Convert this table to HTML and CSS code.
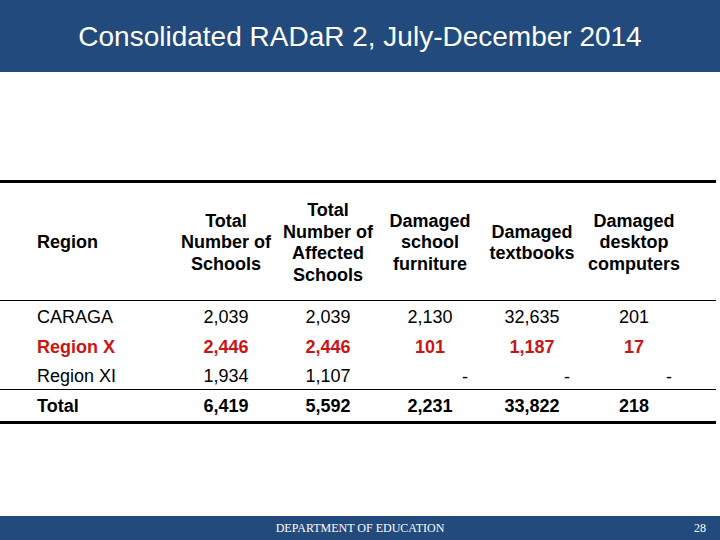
FILE: index.html
```html
<!DOCTYPE html>
<html>
<head>
<meta charset="utf-8">
<link rel="stylesheet" href="styles.css">
</head>
<body>
<div class="slide">
  <header class="title-bar">
    <h1 class="title">Consolidated RADaR 2, July-December 2014</h1>
  </header>
  <main class="content">
    <table class="data">
      <colgroup>
        <col class="c-region">
        <col class="c-num"><col class="c-num"><col class="c-num"><col class="c-num"><col class="c-num">
        <col class="c-pad">
      </colgroup>
      <thead>
        <tr class="head-row">
          <th class="region">Region</th>
          <th>Total<br>Number of<br>Schools</th>
          <th>Total<br>Number of<br>Affected<br>Schools</th>
          <th>Damaged<br>school<br>furniture</th>
          <th>Damaged<br>textbooks</th>
          <th>Damaged<br>desktop<br>computers</th>
          <th></th>
        </tr>
      </thead>
      <tbody>
        <tr class="row r1">
          <td class="region">CARAGA</td>
          <td>2,039</td><td>2,039</td><td>2,130</td><td>32,635</td><td>201</td><td></td>
        </tr>
        <tr class="row r2 highlight">
          <td class="region">Region X</td>
          <td>2,446</td><td>2,446</td><td>101</td><td>1,187</td><td>17</td><td></td>
        </tr>
        <tr class="row r3 last">
          <td class="region">Region XI</td>
          <td>1,934</td><td>1,107</td><td class="dash">-</td><td class="dash">-</td><td class="dash">-</td><td></td>
        </tr>
        <tr class="row total">
          <td class="region">Total</td>
          <td>6,419</td><td>5,592</td><td>2,231</td><td>33,822</td><td>218</td><td></td>
        </tr>
      </tbody>
    </table>
  </main>
  <footer class="foot-bar">
    <span class="dept">DEPARTMENT OF EDUCATION</span>
    <span class="page">28</span>
  </footer>
</div>
</body>
</html>
```

FILE: styles.css
```css
html, body {
  margin: 0;
  padding: 0;
  background: #ffffff;
}

.slide {
  width: 720px;
  height: 540px;
  display: flex;
  flex-direction: column;
  font-family: "Liberation Sans", Arial, sans-serif;
  overflow: hidden;
}

.title-bar {
  height: 72px;
  background: #224a7c;
  display: flex;
  align-items: center;
  justify-content: center;
}

.title {
  margin: 0;
  font-weight: normal;
  font-size: 28px;
  color: #ffffff;
  line-height: 1;
  padding-top: 2px;
}

.content {
  flex: 1;
  padding-top: 108px;
}

.data {
  width: 716px;
  border-collapse: collapse;
  table-layout: fixed;
  border-top: 3px solid #000;
  border-bottom: 3px solid #000;
  font-size: 18px;
  color: #000;
}

.c-region { width: 175px; }
.c-num { width: 102px; }
.c-pad { width: 31px; }

.data th,
.data td {
  padding: 0;
  text-align: center;
  vertical-align: middle;
}

.data .region {
  text-align: left;
  padding-left: 37px;
}

.head-row {
  height: 119px;
  border-bottom: 1px solid #000;
}

.head-row th {
  font-weight: bold;
  line-height: 21.5px;
  padding-top: 3px;
}

.row { height: 30px; }
.row.r1 { height: 31px; }
.row.r1 td { padding-top: 2px; }
.row.r2 td { padding-top: 2px; }
.row.r3 { height: 28px; }
.row.r3 td { padding-top: 3px; }
.row.last { border-bottom: 1px solid #000; }
.row.total { height: 33px; font-weight: bold; }
.row.total td { padding-top: 2px; }

.highlight {
  color: #cc1414;
  font-weight: bold;
}

.data td.dash {
  text-align: right;
  padding-right: 13px;
  padding-top: 5px;
}

.foot-bar {
  height: 24px;
  background: #224a7c;
  position: relative;
  display: flex;
  align-items: center;
  justify-content: center;
  font-family: "Liberation Serif", "Times New Roman", serif;
  font-size: 12px;
  color: #ffffff;
}

.page {
  position: absolute;
  right: 14px;
  top: 5px;
}
```
